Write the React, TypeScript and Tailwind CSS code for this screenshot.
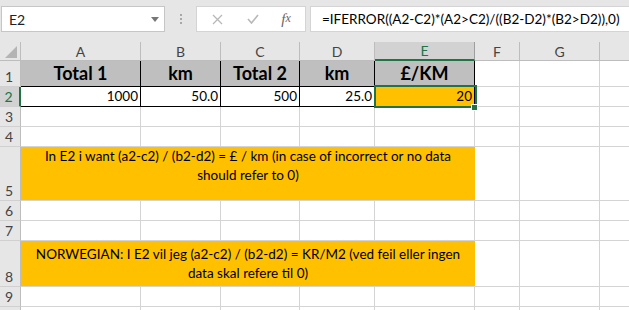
import React from "react";

const cols = [
  { l: "A", w: "w-[120px]" },
  { l: "B", w: "w-[80px]" },
  { l: "C", w: "w-[79px]" },
  { l: "D", w: "w-[75px]" },
  { l: "E", w: "w-[100px]" },
  { l: "F", w: "w-[45px]" },
  { l: "G", w: "w-[80px]" },
  { l: "", w: "w-[80px]" },
];

const rowH = ["h-[26px]", "h-[20px]", "h-[20px]", "h-[20px]", "h-[54px]", "h-[20px]", "h-[20px]", "h-[46px]", "h-[20px]", "h-[20px]"];

const heads = ["Total 1", "km", "Total 2", "km", "£/KM"];
const vals = ["1000", "50.0", "500", "25.0", "20"];

function RowHeader({ n, h }: { n: number; h: string }) {
  const sel = n === 2;
  return (
    <div
      className={`${h} w-[21px] shrink-0 flex items-end justify-center pb-[1px] pr-[2px] text-[14px] leading-[16px] border-b border-[#d0d0d0] ${
        sel ? "bg-[#d2d2d2] text-[#217346] border-r-2 border-r-[#217346]" : "bg-[#e6e6e6] text-[#444] border-r border-r-[#bdbdbd]"
      }`}
    >
      {n < 10 ? n : ""}
    </div>
  );
}

function Grid({ from, n, h }: { from: number; n: number; h: string }) {
  return (
    <>
      {cols.slice(from, from + n).map((c, i) => (
        <div key={i} className={`${c.w} ${h} shrink-0 border-r border-b border-[#d4d4d4]`} />
      ))}
    </>
  );
}

export default function App() {
  return (
    <div className="w-[629px] h-[310px] overflow-hidden bg-white font-['Lato',sans-serif] text-black">
      {/* formula bar */}
      <div className="h-[42px] bg-[#e6e6e6] flex items-start pt-[6px] pl-[1px]">
        <div className="w-[164px] h-[26px] bg-white border border-[#c6c6c6] flex items-center justify-between pl-[7px] pr-[5px] text-[14px] text-[#222] shrink-0">
          <span>E2</span>
          <svg width="8" height="5" viewBox="0 0 8 5">
            <path d="M0 0h8L4 5z" fill="#777" />
          </svg>
        </div>
        <div className="w-[31px] h-[26px] flex flex-col items-center justify-center gap-[2px] shrink-0">
          <span className="w-[2px] h-[2px] bg-[#a8a8a8]" />
          <span className="w-[2px] h-[2px] bg-[#a8a8a8]" />
          <span className="w-[2px] h-[2px] bg-[#a8a8a8]" />
        </div>
        <div className="w-[110px] h-[26px] bg-white border border-[#d4d4d4] flex items-center shrink-0">
          <div className="w-[38px] flex justify-center pl-[2px]">
            <svg width="11" height="11" viewBox="0 0 11 11">
              <path d="M1 1l9 9M10 1l-9 9" stroke="#b8b8b8" strokeWidth="1.3" />
            </svg>
          </div>
          <div className="w-[36px] flex justify-center">
            <svg width="12" height="10" viewBox="0 0 12 10">
              <path d="M1 5l3.5 4L11 1" stroke="#b8b8b8" strokeWidth="1.6" fill="none" />
            </svg>
          </div>
          <div className="w-[30px] flex justify-center font-['Liberation_Serif',serif] italic text-[15px] text-[#666] leading-none">
            f<span className="text-[12px]">x</span>
          </div>
        </div>
        <div className="flex-1 ml-[4px] h-[26px] bg-white border border-[#d4d4d4] border-r-0 flex items-center pl-[11px] text-[13.5px] whitespace-nowrap overflow-hidden">
          =IFERROR((A2-C2)*(A2&gt;C2)/((B2-D2)*(B2&gt;D2)),0)
        </div>
      </div>

      {/* column headers */}
      <div className="flex h-[19px]">
        <div className="w-[21px] h-[19px] shrink-0 bg-[#e6e6e6] border-r border-b border-[#bdbdbd] relative">
          <svg className="absolute right-[3px] bottom-[2px]" width="12" height="12" viewBox="0 0 12 12">
            <path d="M12 0V12H0z" fill="#b4b4b4" />
          </svg>
        </div>
        {cols.map((c, i) =>
          c.l === "E" ? (
            <div
              key={i}
              className={`${c.w} h-[19px] shrink-0 bg-[#d2d2d2] border-r border-[#9e9e9e] border-b-2 border-b-[#217346] flex items-center justify-center text-[14px] text-[#217346]`}
            >
              {c.l}
            </div>
          ) : (
            <div
              key={i}
              className={`${c.w} h-[19px] shrink-0 bg-[#e6e6e6] border-r border-b border-[#bdbdbd] flex items-center justify-center text-[14px] text-[#444]`}
            >
              {c.l}
            </div>
          )
        )}
      </div>

      {/* row 1 */}
      <div className="flex">
        <RowHeader n={1} h={rowH[0]} />
        {heads.map((t, i) => (
          <div
            key={t + i}
            className={`${cols[i].w} ${rowH[0]} shrink-0 bg-[#bfbfbf] border-r border-b border-black flex items-end justify-center pb-[3px] font-bold text-[18px] leading-[20px]`}
          >
            {t}
          </div>
        ))}
        <Grid from={5} n={3} h={rowH[0]} />
      </div>

      {/* row 2 */}
      <div className="flex">
        <RowHeader n={2} h={rowH[1]} />
        {vals.map((t, i) => (
          <div
            key={t}
            className={`${cols[i].w} ${rowH[1]} shrink-0 border-r border-b border-black flex items-end justify-end pr-[2px] pb-[2px] text-[13.5px] leading-[16px] relative ${
              i === 4 ? "bg-[#ffc000]" : ""
            }`}
          >
            {t}
            {i === 4 && (
              <>
                <div className="absolute -left-[1px] -top-[2px] w-[103px] h-[23px] border-2 border-[#217346]" />
                <div className="absolute left-[96px] top-[17px] w-[7px] h-[7px] bg-[#217346] border border-white" />
              </>
            )}
          </div>
        ))}
        <Grid from={5} n={3} h={rowH[1]} />
      </div>

      {/* rows 3-4 */}
      {[3, 4].map((r) => (
        <div key={r} className="flex">
          <RowHeader n={r} h={rowH[r - 1]} />
          <Grid from={0} n={8} h={rowH[r - 1]} />
        </div>
      ))}

      {/* row 5 */}
      <div className="flex">
        <RowHeader n={5} h={rowH[4]} />
        <div className="w-[454px] h-[54px] shrink-0 bg-[#ffc000] border-b border-[#d4d4d4] text-center text-[13.5px] leading-[19px] pt-0 px-[4px]">
          In E2 i want (a2-c2) / (b2-d2) = £ / km (in case of incorrect or no data should refer to 0)
        </div>
        <Grid from={5} n={3} h={rowH[4]} />
      </div>

      {/* rows 6-7 */}
      {[6, 7].map((r) => (
        <div key={r} className="flex">
          <RowHeader n={r} h={rowH[r - 1]} />
          <Grid from={0} n={8} h={rowH[r - 1]} />
        </div>
      ))}

      {/* row 8 */}
      <div className="flex">
        <RowHeader n={8} h={rowH[7]} />
        <div className="w-[454px] h-[46px] shrink-0 bg-[#ffc000] border-b border-[#d4d4d4] text-center text-[13.5px] leading-[19px] pt-[4px] px-[4px]">
          NORWEGIAN: I E2 vil jeg (a2-c2) / (b2-d2) = KR/M2 (ved feil eller ingen data skal refere til 0)
        </div>
        <Grid from={5} n={3} h={rowH[7]} />
      </div>

      {/* rows 9-10 */}
      {[9, 10].map((r) => (
        <div key={r} className="flex">
          <RowHeader n={r} h={rowH[r - 1]} />
          <Grid from={0} n={8} h={rowH[r - 1]} />
        </div>
      ))}
    </div>
  );
}
